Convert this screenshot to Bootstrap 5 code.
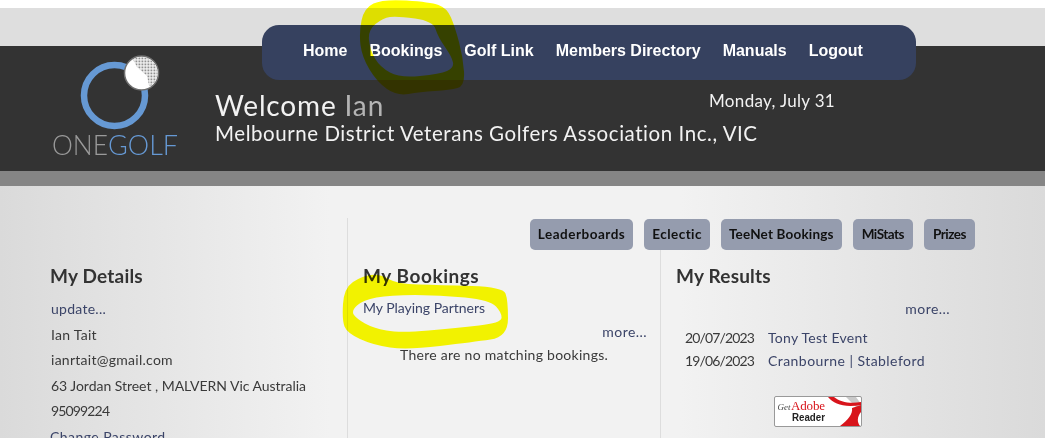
<!DOCTYPE html>
<html lang="en">
<head>
    <meta charset="UTF-8">
    <meta name="viewport" content="width=device-width, initial-scale=1.0">
    <title>OneGolf - Members</title>
    <link href="https://cdn.jsdelivr.net/npm/bootstrap@5.3.0/dist/css/bootstrap.min.css" rel="stylesheet">
    <style>
        html, body { height: 438px; overflow: hidden; }
        body { background: #fff; font-family: Lato, "Liberation Sans", sans-serif; color: #3a3a3a; position: relative; }
        a { color: #3b4468; text-decoration: none; }

        .top-band { margin-top: 8px; height: 38px; background: #dedede; }
        .main-nav { width: 654px; height: 55px; margin-left: 262px; padding-top: 17px; background: #36415f; border-radius: 17px; position: relative; z-index: 1; transform: translateY(17px); padding-left: 30px; }
        .main-nav a { font: bold 16px "Liberation Sans", sans-serif; color: #fff; margin: 0 11px; white-space: nowrap; }

        .head-band { height: 125px; background: #333; color: #f2f2f2; }
        .logo-wrap { width: 215px; flex: none; }
        .welcome-line { font-size: 28px; line-height: 32px; letter-spacing: .85px; padding-top: 43px; width: 494px; }
        .welcome-line span { color: #b4b4b4; }
        .assoc-line { font-size: 20.5px; line-height: 26px; letter-spacing: .55px; white-space: nowrap; margin-top: -1px; }
        .date-line { font-size: 17px; padding-top: 43px; line-height: 24px; letter-spacing: .33px; white-space: nowrap; }
        .grey-strip { height: 15px; background: #858585; }

        .page-body { height: 252px; overflow: hidden; padding-top: 32px; background: linear-gradient(90deg, #dadada 0, #f2f2f2 330px, #f2f2f2 680px, #dadada 1045px); font-size: 14px; letter-spacing: .27px; }
        .col-details { width: 347px; flex: none; padding: 45px 0 0 50px; }
        .col-details .sec-title { margin-bottom: 7px; }
        .col-rest { width: 698px; flex: none; border-left: 1px solid #dddddd; }
        .quick-links { height: 31px; gap: 11px; padding-right: 70px; margin-top: 1px; }
        .quick-links a { background: #959cae; color: #111; font-weight: 700; font-size: 13.5px; line-height: 31px; padding: 0 8px; border-radius: 5px; white-space: nowrap; letter-spacing: .52px; }
        .quick-links a.qk-eclectic { letter-spacing: .45px; }
        .quick-links a.qk-mid { letter-spacing: .18px; }
        .quick-links a.qk-tight { letter-spacing: -.5px; padding: 0 9px; }
        .col-bookings { width: 312px; flex: none; padding: 13px 13px 0 15px; height: 190px; }
        .col-bookings .sec-title { margin-bottom: 6px; letter-spacing: .55px; }
        .col-bookings .info-row { line-height: 25px; }
        .col-results { flex: 1; border-left: 1px solid #dddddd; padding: 13px 95px 0 15px; }
        .sec-title { font-size: 19px; font-weight: 700; color: #333; line-height: 26px; margin: 0 0 8px; letter-spacing: .2px; }
        .info-row { line-height: 25.5px; white-space: nowrap; }
        .info-row.first { margin-left: 1px; }
        .txt-tight { letter-spacing: -.03px; }
        .txt-digits { letter-spacing: -.85px; }
        .txt-wide { letter-spacing: .45px; }
        .more-right { text-align: right; line-height: 24px; letter-spacing: .45px; }
        .more-results { margin: 1px 0 5px; }
        .no-match { padding-left: 37px; line-height: 22px; white-space: nowrap; }
        .result-row { display: flex; line-height: 23px; padding-left: 9px; white-space: nowrap; }
        .result-row span { width: 83px; flex: none; letter-spacing: -.85px; }
        .adobe-badge { display: block; margin: 24px 0 0 98px; letter-spacing: 0; }
        .scribbles { position: absolute; left: 0; top: 0; pointer-events: none; mix-blend-mode: multiply; z-index: 5; }
    </style>
</head>
<body>
    <div class="top-band">
        <nav class="main-nav d-flex">
            <a href="#">Home</a>
            <a href="#">Bookings</a>
            <a href="#">Golf Link</a>
            <a href="#">Members Directory</a>
            <a href="#">Manuals</a>
            <a href="#">Logout</a>
        </nav>
    </div>

    <header class="head-band d-flex">
        <div class="logo-wrap">
            <svg width="215" height="125" viewBox="0 46 215 125">
                <defs>
                    <pattern id="dimples" width="3" height="3" patternUnits="userSpaceOnUse">
                        <rect width="3" height="3" fill="#f4f4f4"/>
                        <rect x=".5" y=".5" width="1.8" height="1.8" fill="#909090"/>
                    </pattern>
                    <clipPath id="ballClip"><circle cx="141.5" cy="73" r="16"/></clipPath>
                </defs>
                <circle cx="114.5" cy="95.5" r="30.5" fill="none" stroke="#6699d4" stroke-width="6.5"/>
                <circle cx="141.5" cy="73" r="17" fill="#fff" stroke="#6f6f6f" stroke-width="1.5"/>
                <path d="M131 56 L137 67 L147 76 L150 90 L162 80 L162 56 Z" fill="url(#dimples)" clip-path="url(#ballClip)"/>
                <text x="52" y="155" font-family="Lato, sans-serif" font-weight="300" font-size="28" fill="#9a9a9a" textLength="56" lengthAdjust="spacingAndGlyphs">ONE</text>
                <text x="108" y="155" font-family="Lato, sans-serif" font-weight="300" font-size="28" fill="#6699d4" textLength="70" lengthAdjust="spacingAndGlyphs">GOLF</text>
            </svg>
        </div>
        <div>
            <div class="d-flex">
                <div class="welcome-line">Welcome <span>Ian</span></div>
                <div class="date-line">Monday, July 31</div>
            </div>
            <div class="assoc-line">Melbourne District Veterans Golfers Association Inc., VIC</div>
        </div>
    </header>
    <div class="grey-strip"></div>

    <main class="page-body d-flex">
        <section class="col-details">
            <h2 class="sec-title">My Details</h2>
            <div class="info-row first"><a href="#">update...</a></div>
            <div class="info-row first">Ian Tait</div>
            <div class="info-row first">ianrtait@gmail.com</div>
            <div class="info-row first txt-tight">63 Jordan Street , MALVERN Vic Australia</div>
            <div class="info-row first txt-digits">95099224</div>
            <div class="info-row txt-wide"><a href="#">Change Password</a></div>
        </section>
        <div class="col-rest">
            <div class="quick-links d-flex justify-content-end">
                <a href="#">Leaderboards</a>
                <a href="#" class="qk-eclectic">Eclectic</a>
                <a href="#" class="qk-mid">TeeNet Bookings</a>
                <a href="#" class="qk-tight">MiStats</a>
                <a href="#" class="qk-tight">Prizes</a>
            </div>
            <div class="d-flex">
                <section class="col-bookings">
                    <h2 class="sec-title">My Bookings</h2>
                    <div class="info-row txt-tight"><a href="#">My Playing Partners</a></div>
                    <div class="more-right"><a href="#">more...</a></div>
                    <div class="no-match">There are no matching bookings.</div>
                </section>
                <section class="col-results">
                    <h2 class="sec-title">My Results</h2>
                    <div class="more-right more-results"><a href="#">more...</a></div>
                    <div class="result-row"><span>20/07/2023</span><a href="#">Tony Test Event</a></div>
                    <div class="result-row"><span>19/06/2023</span><a href="#" class="txt-wide">Cranbourne | Stableford</a></div>
                    <svg class="adobe-badge" width="88" height="31" viewBox="0 0 88 31">
                        <rect x=".5" y=".5" width="87" height="30" rx="1.5" fill="#fff" stroke="#999"/>
                        <path d="M72 1 L82 1 L87 8 L87 16 Z" fill="#c9c9c9"/>
                        <path d="M54 1 C60 8 70 12 87 9 L87 6 C76 8 66 6 60 1 Z" fill="#d8141b"/>
                        <path d="M66 30 C74 24 79 18 78 12 L87 9 L87 16 C83 21 83 26 86 30 Z" fill="#d8141b"/>
                        <text x="3.5" y="14" font-family="Liberation Serif, serif" font-style="italic" font-size="9" fill="#444">Get</text>
                        <text x="17" y="14" font-family="Liberation Serif, serif" font-size="13" fill="#d8141b" textLength="34">Adobe</text>
                        <text x="18" y="25" font-family="Liberation Sans, sans-serif" font-weight="700" font-size="11" fill="#222" textLength="33" lengthAdjust="spacingAndGlyphs">Reader</text>
                    </svg>
                </section>
            </div>
        </div>
    </main>

    <!-- yellow marker rings drawn on the screenshot -->
    <svg class="scribbles" width="1045" height="438">
        <path id="ring1" fill="#ffff00" fill-rule="evenodd"/>
        <path id="ring2" fill="#ffff00" fill-rule="evenodd"/>
    </svg>

    <script src="https://cdn.jsdelivr.net/npm/bootstrap@5.3.0/dist/js/bootstrap.bundle.min.js"></script>
    <script>
        // closed smooth curve through midpoints of the given points
        function smooth(pts) {
            let d = "";
            pts.forEach((p, i) => {
                const n = pts[(i + 1) % pts.length];
                const mx = (p[0] + n[0]) / 2, my = (p[1] + n[1]) / 2;
                d += i === 0 ? `M${mx} ${my}` : ` Q${p[0]} ${p[1]} ${mx} ${my}`;
            });
            const a = pts[0], b = pts[1];
            return d + ` Q${a[0]} ${a[1]} ${(a[0] + b[0]) / 2} ${(a[1] + b[1]) / 2} Z`;
        }
        document.getElementById("ring1").setAttribute("d",
            smooth([[359,33],[364,8],[383,-1],[430,2],[447,8],[455,27],[463,57],[465,86],[450,90],[420,92],[397,96],[377,82],[362,57]]) + " " +
            smooth([[368,30],[383,18],[397,16],[433,21],[438,37],[452,57],[454,68],[440,74],[400,78],[380,67],[370,50]]));
        document.getElementById("ring2").setAttribute("d",
            smooth([[342,320],[344,288],[362,276],[380,274],[397,284],[440,285],[503,287],[508,300],[508,337],[473,342],[407,350],[373,345],[347,333]]) + " " +
            smooth([[351,311],[363,300],[390,295],[440,295],[490,300],[502,313],[501,323],[457,328],[400,333],[373,328],[357,319]]));
    </script>
</body>
</html>
